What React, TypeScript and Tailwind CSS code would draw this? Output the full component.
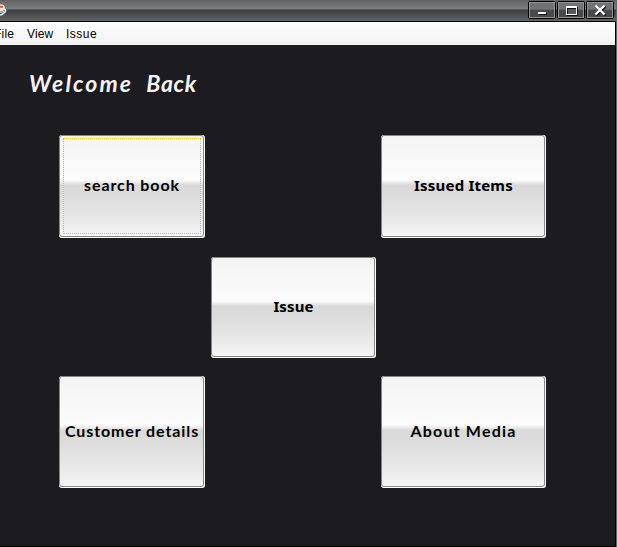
import type { ReactNode } from "react";

function WindowButton({ children }: { children: ReactNode }) {
  return (
    <button className="h-[18px] w-[28px] rounded-[2px] border border-black bg-[#555759] p-0">
      <span className="block h-full w-full border border-[#929496] bg-linear-to-b from-[#707274] from-45% to-[#47494b] to-50%">
        <svg viewBox="0 0 24 14" width="24" height="14" shapeRendering="crispEdges">
          {children}
        </svg>
      </span>
    </button>
  );
}

function TitleBar() {
  return (
    <header className="flex h-[22px] shrink-0 justify-between border-b border-black bg-[linear-gradient(to_bottom,#606264_0px,#7c7e80_9px,#3c3e40_10px,#616365_21px)]">
      <svg className="mt-[3px]" width="8" height="14" viewBox="0 0 8 14">
        <path d="M0 1.500 Q4 .5 5 5 L4 9 Q2 10 0 10Z" fill="#e7e5e0" />
        <path d="M0 3 Q3 2 3.500 4 Q2 5.500 0 4.500Z" fill="#c56a27" />
        <path d="M4 6 Q7.500 7 4 10 Q2 12 0 12" fill="none" stroke="#e9edf1" strokeWidth="1.5" />
        <path d="M0 9 Q3 9 4 7" fill="none" stroke="#7f8994" strokeWidth="1" />
      </svg>
      <div className="mr-[2px] flex gap-px pt-px">
        <WindowButton>
          <path d="M9 10h8v2h-8z" fill="#111" />
          <path d="M8 9h8v2H8z" fill="#fff" />
        </WindowButton>
        <WindowButton>
          <path d="M8 4h11v9H8z" fill="#111" />
          <path d="M7 3h11v9H7z" fill="#fff" />
          <path d="M8 5h9v6H8z" fill="#56585a" />
          <path d="M8 5h9v1H9v5H8z" fill="#111" />
        </WindowButton>
        <WindowButton>
          <g shapeRendering="auto" fill="none" strokeWidth="2.4">
            <path d="M8.500 3.500l9 9M17.500 3.500l-9 9" stroke="#111" />
            <path d="M7.500 2.500l9 9M16.500 2.500l-9 9" stroke="#fff" />
          </g>
        </WindowButton>
      </div>
    </header>
  );
}

function MenuBar() {
  return (
    <nav className="flex h-[23px] shrink-0 items-center bg-linear-to-b from-white to-[#f1f1f1] font-['Liberation_Sans',Arial,sans-serif] text-[12px] leading-[14px] text-black">
      <span className="-ml-[6px] w-[33px] tracking-[0.2px]">File</span>
      <span className="w-[39px] tracking-[0.1px]">View</span>
      <span className="tracking-[0.5px]">Issue</span>
    </nav>
  );
}

function PanelButton({
  className,
  focused = false,
  children,
}: {
  className: string;
  focused?: boolean;
  children: ReactNode;
}) {
  return (
    <button
      className={`${className} rounded-[3px] border-r border-b border-white bg-white font-['Lato','Open_Sans',sans-serif] text-[16px] font-bold leading-5 text-black`}
    >
      <span className="block h-full w-full rounded-[3px] border border-[#858585] bg-[linear-gradient(to_bottom,#f4f4f4_0%,#fcfcfc_44%,#d9d9d9_49%,#dddddd_62%,#ebebeb_87%,#f6f6f6_100%)] p-[2px] pl-[3px]">
        <span
          className={`flex h-full w-full items-center justify-center whitespace-nowrap border border-dotted pb-[2px] ${focused ? "border-[#f5c211]" : "border-transparent"}`}
        >
          {children}
        </span>
      </span>
    </button>
  );
}

export default function App() {
  return (
    <div className="flex h-[547px] w-[617px] flex-col overflow-hidden border-r border-[#656565] bg-[#1c1b20]">
      <TitleBar />
      <div className="flex min-h-0 flex-1 flex-col border-r border-b border-black">
        <MenuBar />
        <main className="pl-[29px] pt-[22px]">
          <h1 className="h-[68px] whitespace-nowrap font-['Lato','Open_Sans',sans-serif] text-[23px] font-bold italic leading-[33px] text-[#f3f3f3]">
            <span className="tracking-[2.1px]">Welcome </span>
            <span className="ml-[6px] tracking-[0.7px]">Back</span>
          </h1>
          <div className="ml-[30px] flex w-[487px] flex-col">
            <div className="flex h-[103px] justify-between">
              <PanelButton className="w-[146px]" focused>
                <span className="tracking-[0.9px]">search book</span>
              </PanelButton>
              <PanelButton className="w-[165px]">
                <span className="font-['Noto_Sans',sans-serif] text-[15px] tracking-[0.2px]">Issued Items</span>
              </PanelButton>
            </div>
            <div className="mt-[19px] flex h-[101px] pl-[152px]">
              <PanelButton className="w-[165px]">
                <span className="font-['Noto_Sans',sans-serif] text-[15px] tracking-[0.1px]">Issue</span>
              </PanelButton>
            </div>
            <div className="mt-[18px] flex h-[112px] justify-between">
              <PanelButton className="w-[146px]">
                <span className="tracking-[0.9px]">Customer details</span>
              </PanelButton>
              <PanelButton className="w-[165px]">
                <span className="tracking-[1.2px]">About Media</span>
              </PanelButton>
            </div>
          </div>
        </main>
      </div>
    </div>
  );
}
